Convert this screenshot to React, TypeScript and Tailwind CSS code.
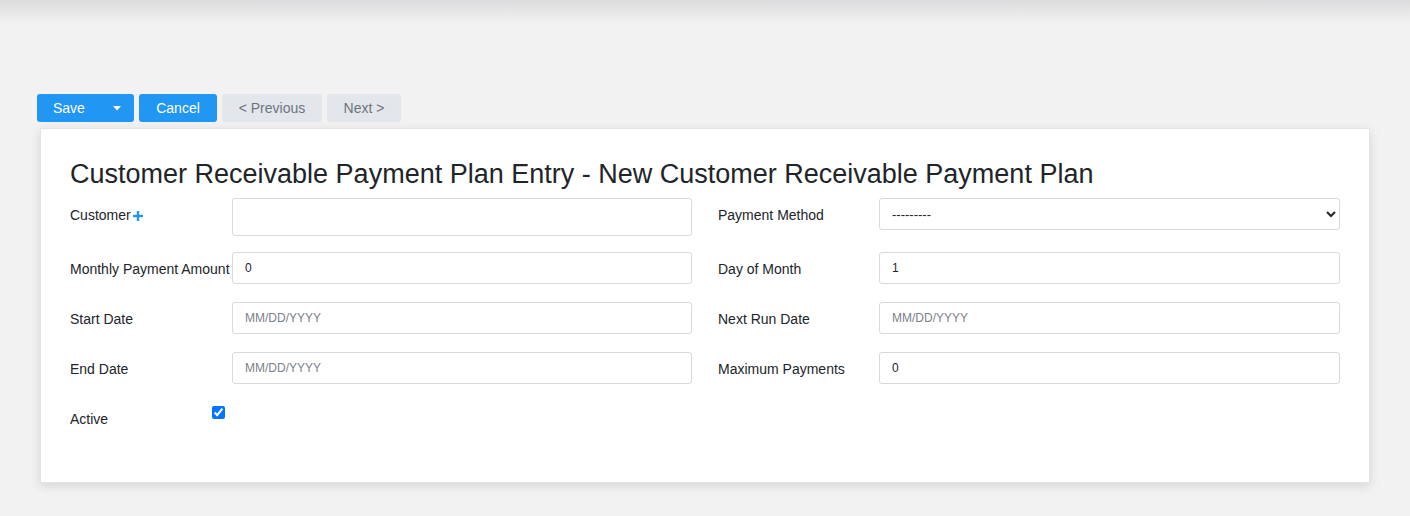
import type { ReactNode } from "react";

const font = { fontFamily: '"Liberation Sans", Arial, sans-serif' };

function PlusIcon() {
  return (
    <svg width="10" height="10" viewBox="0 0 10 10" className="ml-[2px] mt-[1px]">
      <rect x="3.8" y="0" width="2.4" height="10" fill="#2196f3" />
      <rect x="0" y="3.8" width="10" height="2.4" fill="#2196f3" />
    </svg>
  );
}

function TextInput({ value, placeholder }: { value?: string; placeholder?: string }) {
  return (
    <input
      type="text"
      defaultValue={value}
      placeholder={placeholder}
      className="h-[32px] w-full rounded-[3px] border border-[#d6d9dd] bg-white px-[12px] text-[12px] text-[#212529] placeholder:text-[#7b8188] outline-none"
      style={font}
    />
  );
}

function Field({ label, children, right }: { label: ReactNode; children: ReactNode; right?: boolean }) {
  return (
    <div className="flex flex-1 items-center">
      <div className={`flex shrink-0 items-center pt-[2px] text-[14px] text-[#212529] ${right ? "w-[161px]" : "w-[162px]"}`}>{label}</div>
      <div className="flex-1">{children}</div>
    </div>
  );
}

export default function App() {
  return (
    <div className="min-h-[516px] bg-[#f2f2f2]" style={font}>
      <div className="h-[24px] bg-gradient-to-b from-[#dcdcde] to-[#f2f2f2]" />

      <div className="flex gap-[5px] pl-[37px] pt-[70px]">
        <button className="flex h-[28px] w-[97px] items-center justify-between rounded-[3px] bg-[#2196f3] pl-[16px] pr-[13px] text-[14px] text-white">
          <span>Save</span>
          <svg width="8" height="5" viewBox="0 0 8 5">
            <path d="M0 0h8L4 4.5z" fill="#ffffff" />
          </svg>
        </button>
        <button className="h-[28px] w-[78px] rounded-[3px] bg-[#2196f3] text-[14px] text-white">Cancel</button>
        <button className="h-[28px] w-[100px] rounded-[3px] bg-[#e3e6ea] text-[14px] text-[#6c757d]">&lt; Previous</button>
        <button className="h-[28px] w-[74px] rounded-[3px] bg-[#e3e6ea] text-[14px] text-[#6c757d]">Next &gt;</button>
      </div>

      <div className="ml-[40px] mt-[6px] w-[1330px] border border-[#e1e5ea] bg-white px-[29px] pb-[46px] pt-[29px] shadow-[0_3px_10px_rgba(0,0,0,0.12)]">
        <h1 className="text-[27px] leading-[32px] text-[#212529]">
          Customer Receivable Payment Plan Entry - New Customer Receivable Payment Plan
        </h1>

        <div className="mt-[8px] flex gap-[26px]">
          <div className="flex flex-1 items-start">
            <div className="flex h-[34px] w-[162px] shrink-0 items-center text-[14px] text-[#212529]">
              Customer
              <PlusIcon />
            </div>
            <input
              type="text"
              className="h-[38px] flex-1 rounded-[3px] border border-[#d6d9dd] bg-white outline-none"
            />
          </div>
          <div className="flex flex-1 items-start">
            <div className="flex h-[34px] w-[161px] shrink-0 items-center text-[14px] text-[#212529]">Payment Method</div>
            <select
              className="h-[32px] flex-1 rounded-[3px] border border-[#d6d9dd] bg-white px-[8px] text-[13px] text-[#212529] outline-none"
              style={font}
              defaultValue=""
            >
              <option value="">---------</option>
            </select>
          </div>
        </div>

        <div className="mt-[16px] flex gap-[26px]">
          <Field label="Monthly Payment Amount">
            <TextInput value="0" />
          </Field>
          <Field label="Day of Month" right>
            <TextInput value="1" />
          </Field>
        </div>

        <div className="mt-[18px] flex gap-[26px]">
          <Field label="Start Date">
            <TextInput placeholder="MM/DD/YYYY" />
          </Field>
          <Field label="Next Run Date" right>
            <TextInput placeholder="MM/DD/YYYY" />
          </Field>
        </div>

        <div className="mt-[18px] flex gap-[26px]">
          <Field label="End Date">
            <TextInput placeholder="MM/DD/YYYY" />
          </Field>
          <Field label="Maximum Payments" right>
            <TextInput value="0" />
          </Field>
        </div>

        <div className="mt-[18px] flex h-[34px] items-start">
          <div className="flex h-[34px] w-[142px] items-center text-[14px] text-[#212529]">Active</div>
          <input type="checkbox" defaultChecked className="m-0 mt-[4px] h-[13px] w-[13px]" />
        </div>
      </div>
    </div>
  );
}
